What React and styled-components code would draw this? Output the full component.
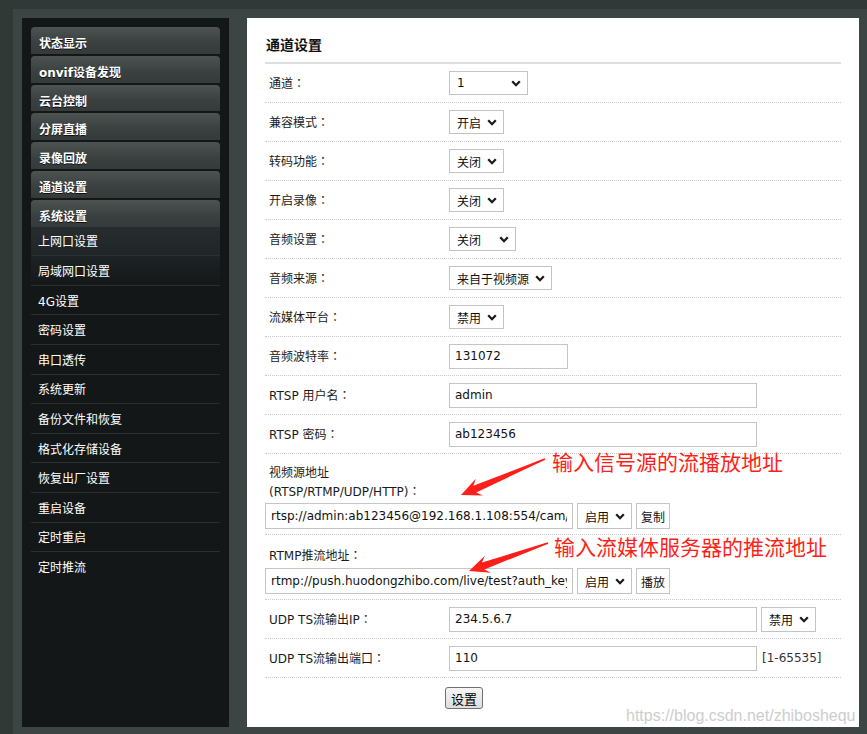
import React from "react";
import styled, { createGlobalStyle } from "styled-components";

const GlobalStyle = createGlobalStyle`
  body {
    margin: 0;
    background: #313937;
    font-family: "DejaVu Sans", "Noto Sans CJK SC", sans-serif;
  }
`;

const mainMenu = ["状态显示", "onvif设备发现", "云台控制", "分屏直播", "录像回放", "通道设置", "系统设置"];
const subMenu = [
  "上网口设置",
  "局域网口设置",
  "4G设置",
  "密码设置",
  "串口透传",
  "系统更新",
  "备份文件和恢复",
  "格式化存储设备",
  "恢复出厂设置",
  "重启设备",
  "定时重启",
  "定时推流",
];

const selectRows = [
  { label: "通道", value: "1", w: 79 },
  { label: "兼容模式", value: "开启", w: 55 },
  { label: "转码功能", value: "关闭", w: 55 },
  { label: "开启录像", value: "关闭", w: 55 },
  { label: "音频设置", value: "关闭", w: 67 },
  { label: "音频来源", value: "来自于视频源", w: 103 },
  { label: "流媒体平台", value: "禁用", w: 55 },
];

function Chevron() {
  return (
    <svg width="10" height="7" viewBox="0 0 10 7">
      <path d="M1.2 1.3 L5 5.2 L8.8 1.3" fill="none" stroke="#1a1a1a" strokeWidth="2.3" />
    </svg>
  );
}

function Select({ w, h, children }) {
  return (
    <SelectBox $w={w} $h={h}>
      <span>{children}</span>
      <Chevron />
    </SelectBox>
  );
}

// tapered red arrow, from tail to tip (panel coords)
function Arrow({ tail, tip }) {
  const dx = tip[0] - tail[0];
  const dy = tip[1] - tail[1];
  const len = Math.hypot(dx, dy);
  const ux = dx / len;
  const uy = dy / len;
  const nx = -uy;
  const ny = ux;
  const bx = tip[0] - ux * 17;
  const by = tip[1] - uy * 17;
  const pts = [
    [tail[0] + nx * 0.8, tail[1] + ny * 0.8],
    [bx + ux * 2 + nx * 3.6, by + uy * 2 + ny * 3.6],
    [bx - ux * 3 + nx * 9, by - uy * 3 + ny * 9],
    tip,
    [bx - ux * 3 - nx * 9, by - uy * 3 - ny * 9],
    [bx + ux * 2 - nx * 3.6, by + uy * 2 - ny * 3.6],
    [tail[0] - nx * 0.8, tail[1] - ny * 0.8],
  ];
  return <polygon points={pts.map((p) => p.join(",")).join(" ")} fill="#ff1f1a" />;
}

export default function App() {
  return (
    <>
      <GlobalStyle />
      <Frame>
        <Sidebar>
          {mainMenu.map((m, i) => (
            <MenuTab key={m} $last={i === mainMenu.length - 1}>
              {m}
            </MenuTab>
          ))}
          {subMenu.map((m, i) => (
            <SubItem key={m} $variant={i} $last={i === subMenu.length - 1}>
              {m}
            </SubItem>
          ))}
        </Sidebar>
        <Panel>
          <Title>通道设置</Title>
          {selectRows.map((r) => (
            <Row key={r.label}>
              <Label>
                {r.label}
                <Colon>：</Colon>
              </Label>
              <Select w={r.w}>{r.value}</Select>
            </Row>
          ))}
          <Row>
            <Label>
              音频波特率<Colon>：</Colon>
            </Label>
            <TextInput $w={119} defaultValue="131072" readOnly />
          </Row>
          <Row>
            <Label>
              RTSP 用户名<Colon>：</Colon>
            </Label>
            <TextInput $w={308} defaultValue="admin" readOnly />
          </Row>
          <Row>
            <Label>
              RTSP 密码<Colon>：</Colon>
            </Label>
            <TextInput $w={308} defaultValue="ab123456" readOnly />
          </Row>
          <StackRow $h={81}>
            <Label>
              <Line>视频源地址</Line>
              <Line>
                (RTSP/RTMP/UDP/HTTP)<Colon>：</Colon>
              </Line>
            </Label>
            <Controls>
              <TextInput
                $w={308}
                $h={26}
                defaultValue="rtsp://admin:ab123456@192.168.1.108:554/cam/realmonitor?channel=1"
                readOnly
              />
              <Select w={55} h={26}>启用</Select>
              <SmallButton>复制</SmallButton>
            </Controls>
          </StackRow>
          <StackRow $h={65}>
            <Label>
              <Line>
                RTMP推流地址<Colon>：</Colon>
              </Line>
            </Label>
            <Controls>
              <TextInput
                $w={308}
                $h={26}
                defaultValue="rtmp://push.huodongzhibo.com/live/test?auth_key=1600000000-0-0-abc"
                readOnly
              />
              <Select w={55} h={26}>启用</Select>
              <SmallButton>播放</SmallButton>
            </Controls>
          </StackRow>
          <Row>
            <Label>
              UDP TS流输出IP<Colon>：</Colon>
            </Label>
            <Controls>
              <TextInput $w={308} defaultValue="234.5.6.7" readOnly />
              <Select w={55} h={25}>禁用</Select>
            </Controls>
          </Row>
          <Row>
            <Label>
              UDP TS流输出端口<Colon>：</Colon>
            </Label>
            <Controls>
              <TextInput $w={308} defaultValue="110" readOnly />
              <Hint>[1-65535]</Hint>
            </Controls>
          </Row>
          <ButtonRow>
            <SubmitButton>设置</SubmitButton>
          </ButtonRow>

          <Overlay width="612" height="709">
            <Arrow tail={[298, 441]} tip={[214, 477]} />
            <Arrow tail={[301, 525]} tip={[222, 553]} />
          </Overlay>
          <Note $left={305} $top={431}>输入信号源的流播放地址</Note>
          <Note $left={307} $top={516}>输入流媒体服务器的推流地址</Note>
          <Watermark>https://blog.csdn.net/zhiboshequ</Watermark>
        </Panel>
      </Frame>
    </>
  );
}

const Frame = styled.div`
  margin: 9px 0 0 13px;
  padding: 9px 8px 7px 9px;
  background: #3c4543;
  display: flex;
  gap: 18px;
`;

const Sidebar = styled.nav`
  width: 207px;
  flex-shrink: 0;
  box-sizing: border-box;
  background: #131718;
  padding: 9px 9px 0 9px;
`;

const MenuTab = styled.div`
  height: 26.8px;
  box-sizing: border-box;
  margin-bottom: ${(p) => (p.$last ? "0" : "2px")};
  padding: 10px 0 0 8px;
  border-radius: 4px 4px 0 0;
  background: linear-gradient(#4c5351, #3a403f 60%, #353b3a);
  color: #fff;
  font-size: 12px;
  font-weight: bold;
  line-height: 14px;
  text-shadow: 0 1px 0 #111;
`;

const SubItem = styled.div`
  height: 28.6px;
  display: flex;
  align-items: center;
  padding-left: 7px;
  color: #fff;
  font-size: 12px;
  border-bottom: ${(p) => (p.$last ? "none" : "1px solid #2a3031")};
  background: ${(p) =>
    p.$variant === 0
      ? "linear-gradient(#272d2e, #202527)"
      : p.$variant === 1
      ? "linear-gradient(#1d2224, #141819)"
      : "transparent"};
`;

const Panel = styled.main`
  position: relative;
  overflow: hidden;
  width: 612px;
  height: 709px;
  box-sizing: border-box;
  background: #fff;
  padding: 0 18px;
  color: #1b1b1b;
  font-size: 12px;
`;

const Title = styled.h2`
  margin: 0;
  padding: 17px 0 7px 1px;
  font-size: 14px;
  line-height: 20px;
  font-weight: bold;
  color: #111;
  border-bottom: 2px solid #dedede;
`;

const Row = styled.div`
  height: 38px;
  display: flex;
  align-items: center;
  border-bottom: 1px dotted #c9c9c9;
`;

const StackRow = styled.div`
  height: ${(p) => p.$h}px;
  box-sizing: border-box;
  display: flex;
  flex-direction: column;
  justify-content: space-between;
  padding: 11px 0 5px;
  border-bottom: 1px dotted #c9c9c9;
`;

const Label = styled.div`
  width: 184px;
  flex-shrink: 0;
  box-sizing: border-box;
  padding-left: 4px;
  line-height: 17px;
`;

const Line = styled.div`
  height: 17px;
  line-height: 17px;
  white-space: nowrap;
`;

const Colon = styled.span`
  font-family: "Noto Sans CJK JP", "Noto Sans CJK SC", sans-serif;
`;

const Controls = styled.div`
  display: flex;
  align-items: center;
  gap: 4px;
`;

const SelectBox = styled.div`
  width: ${(p) => p.$w}px;
  height: ${(p) => p.$h || 24}px;
  box-sizing: border-box;
  display: inline-flex;
  align-items: center;
  justify-content: space-between;
  padding: 0 6px 0 7px;
  border: 1px solid #c3c3c3;
  background: #fff;
  color: #111;
  font-size: 12px;

  svg {
    flex-shrink: 0;
  }
`;

const TextInput = styled.input`
  width: ${(p) => p.$w}px;
  height: ${(p) => p.$h || 25}px;
  box-sizing: border-box;
  margin: 0;
  padding: 0 5px;
  border: 1px solid #c5c5c5;
  font-family: "DejaVu Sans", "Noto Sans CJK SC", sans-serif;
  font-size: 12px;
  color: #111;
  outline: none;
`;

const SmallButton = styled.div`
  width: 34px;
  height: 26px;
  box-sizing: border-box;
  display: flex;
  align-items: center;
  justify-content: center;
  border: 1px solid #c5c5c5;
  background: #fff;
  color: #111;
  font-size: 12px;
`;

const Hint = styled.span`
  margin-left: 1px;
  color: #333;
  font-size: 12px;
`;

const ButtonRow = styled.div`
  padding: 9px 0 0 180px;
`;

const SubmitButton = styled.div`
  width: 38px;
  height: 22px;
  box-sizing: border-box;
  display: flex;
  align-items: center;
  justify-content: center;
  border: 1px solid #707070;
  border-radius: 3px;
  background: linear-gradient(#f6f6f6, #dddddd);
  color: #000;
  font-size: 13px;
`;

const Overlay = styled.svg`
  position: absolute;
  left: 0;
  top: 0;
  pointer-events: none;
`;

const Note = styled.span`
  position: absolute;
  left: ${(p) => p.$left}px;
  top: ${(p) => p.$top}px;
  font-family: "Noto Sans CJK SC", sans-serif;
  font-size: 21px;
  line-height: 24px;
  color: #ff1f1a;
  white-space: nowrap;
`;

const Watermark = styled.span`
  position: absolute;
  left: 379px;
  top: 689px;
  font-family: "Liberation Sans", Arial, sans-serif;
  font-size: 16px;
  line-height: 18px;
  color: #cdcdcd;
  white-space: nowrap;
`;
